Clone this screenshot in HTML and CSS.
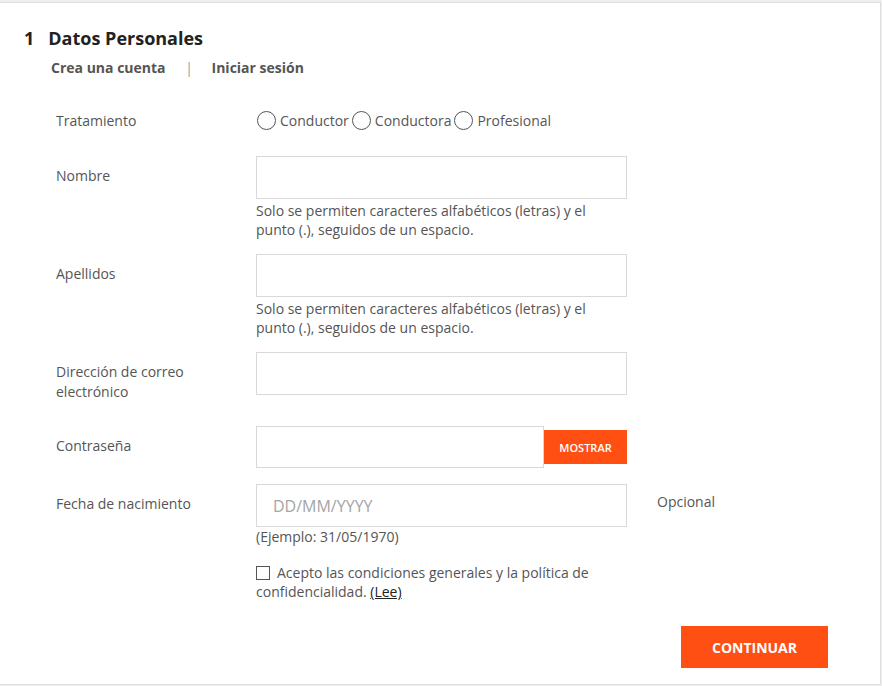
FILE: index.html
```html
<!DOCTYPE html>
<html>
<head>
  <title>Datos Personales</title>
  <link rel="stylesheet" href="styles.css">
</head>
<body>
  <div class="card">
    <h1 class="step-title"><span class="step-num">1</span>Datos Personales</h1>
    <div class="tabs">
      <span class="tab">Crea una cuenta</span>
      <span class="tab-sep">|</span>
      <span class="tab">Iniciar sesión</span>
    </div>

    <form class="form">
      <div class="row row-radio">
        <div class="label label-flat">Tratamiento</div>
        <div class="radios">
          <label class="radio"><span class="radio-dot"></span>Conductor</label>
          <label class="radio"><span class="radio-dot"></span>Conductora</label>
          <label class="radio"><span class="radio-dot"></span>Profesional</label>
        </div>
      </div>

      <div class="row">
        <div class="label">Nombre</div>
        <div class="field">
          <div class="input"></div>
          <p class="hint">Solo se permiten caracteres alfabéticos (letras) y el punto (.), seguidos de un espacio.</p>
        </div>
      </div>

      <div class="row">
        <div class="label">Apellidos</div>
        <div class="field">
          <div class="input"></div>
          <p class="hint">Solo se permiten caracteres alfabéticos (letras) y el punto (.), seguidos de un espacio.</p>
        </div>
      </div>

      <div class="row">
        <div class="label">Dirección de correo electrónico</div>
        <div class="field">
          <div class="input"></div>
        </div>
      </div>

      <div class="row row-pass">
        <div class="label">Contraseña</div>
        <div class="field password">
          <div class="input input-pass"></div>
          <button type="button" class="btn-show">MOSTRAR</button>
        </div>
      </div>

      <div class="row row-date">
        <div class="label">Fecha de nacimiento</div>
        <div class="field">
          <div class="input"><span class="placeholder">DD/MM/YYYY</span></div>
          <p class="hint hint-date">(Ejemplo: 31/05/1970)</p>
          <p class="terms"><span class="checkbox"></span>Acepto las condiciones generales y la política de confidencialidad.&nbsp;<a class="terms-link">(Lee)</a></p>
        </div>
        <div class="optional">Opcional</div>
      </div>

      <div class="actions">
        <button type="button" class="btn-continue">CONTINUAR</button>
      </div>
    </form>
  </div>
</body>
</html>
```

FILE: styles.css
```css
body {
  margin: 0;
  background-color: #efefef;
  font-family: "Open Sans", "Liberation Sans", sans-serif;
  color: #555;
}

.card {
  box-sizing: border-box;
  height: 683px;
  margin: 2px 1px 0 0;
  padding-top: 23px;
  background-color: #fff;
  border: 1px solid #dedede;
  border-left: none;
}

.step-title {
  margin: 0;
  padding-left: 24px;
  font-size: 18px;
  line-height: 24px;
  font-weight: 700;
  color: #222;
}

.step-num {
  margin-right: 14px;
}

.tabs {
  margin-top: 8px;
  padding-left: 51px;
  font-size: 14px;
  line-height: 20px;
}

.tab {
  font-weight: 700;
  color: #555;
}

.tab-sep {
  margin: 0 15px 0 16px;
  color: #999;
}

.form {
  margin-top: 32px;
  padding-left: 56px;
  font-size: 14px;
  line-height: 20px;
}

.row {
  display: grid;
  grid-template-columns: 200px 371px auto;
  margin-bottom: 15px;
}

.row-radio {
  margin-bottom: 25px;
}

.label {
  padding: 10px 60px 9px 0;
}

.label-flat {
  padding-top: 1px;
  padding-bottom: 0;
}

.radios {
  display: flex;
  align-items: center;
}

.radio {
  display: inline-flex;
  align-items: center;
  margin-right: 2px;
}

.radio-dot {
  box-sizing: border-box;
  width: 19px;
  height: 19px;
  margin: 0 4px 0 1px;
  border: 1.6px solid #555;
  border-radius: 50%;
}

.input {
  box-sizing: border-box;
  height: 43px;
  border: 1px solid #d9d9d9;
  display: flex;
  align-items: center;
  padding-left: 16px;
}

.placeholder {
  font-size: 16px;
  color: #a5a5a5;
}

.hint {
  margin: 2px 0 0;
  line-height: 19px;
}

.password {
  display: flex;
  align-items: center;
}

.input-pass {
  flex: 1;
  height: 42px;
}

.btn-show {
  width: 83px;
  height: 34px;
  padding: 0;
  border: none;
  background-color: #ff4f12;
  color: #fff;
  font-family: "Open Sans", "Liberation Sans", sans-serif;
  font-size: 11px;
  font-weight: 600;
  cursor: pointer;
}

.row-pass {
  margin-bottom: 16px;
}

.row-date {
  margin-bottom: 0;
}

.hint-date {
  margin-top: 0;
}

.optional {
  padding: 8px 0 0 30px;
}

.terms {
  margin: 17px 0 0;
  line-height: 19px;
}

.checkbox {
  display: inline-block;
  box-sizing: border-box;
  width: 14px;
  height: 14px;
  margin-right: 7px;
  border: 1px solid #555;
  vertical-align: -2px;
}

.terms-link {
  color: #222;
  text-decoration: underline;
}

.actions {
  display: flex;
  justify-content: flex-end;
  margin-top: 25px;
  padding-right: 52px;
}

.btn-continue {
  width: 147px;
  height: 42px;
  border: none;
  background-color: #ff4f12;
  color: #fff;
  font-family: "Open Sans", "Liberation Sans", sans-serif;
  font-size: 14px;
  font-weight: 700;
  cursor: pointer;
}
```
